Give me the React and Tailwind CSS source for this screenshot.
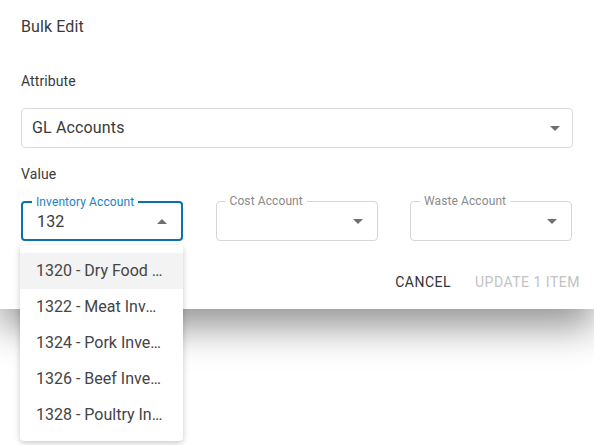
import React from 'react';

const Arrow = ({ up }) => (
    <svg width="10" height="5" viewBox="0 0 10 5" className="shrink-0">
        <path d={up ? 'M0 5 L5 0 L10 5 Z' : 'M0 0 L5 5 L10 0 Z'} fill="#6f6f6f" />
    </svg>
);

const OutlinedField = ({ label, value, focused }) => (
    <div
        className={`relative w-[162px] h-10 rounded flex items-center pl-[14px] pr-[14px] ${
            focused ? 'border-2 border-[#0b70ad]' : 'border border-[#d6d6d6]'
        }`}
    >
        <span
            className={`absolute -top-[8px] px-1 bg-white text-[12px] leading-[14px] tracking-[0.1px] ${
                focused ? 'left-[9px] text-[#1b82c0]' : 'left-[9px] text-[#8a8a8a]'
            }`}
        >
            {label}
        </span>
        <span className="flex-1 text-[16px] tracking-[0.15px] text-[#3a3a3a] pt-[1px]">{value}</span>
        <Arrow up={focused} />
    </div>
);

const options = [
    '1320 - Dry Food Inventory',
    '1322 - Meat Inventory',
    '1324 - Pork Inventory',
    '1326 - Beef Inventory',
    '1328 - Poultry Inventory',
];

export default function App() {
    return (
        <div className="w-[594px] h-[445px] bg-white overflow-hidden font-['Roboto',sans-serif]">
            <div className="relative bg-white h-[309px] px-[21px] pt-[15px] shadow-[0_18px_36px_rgba(0,0,0,0.42)]">
                <h2 className="text-[16px] leading-6 tracking-[0.1px] text-[#3a3a3a]">Bulk Edit</h2>

                <div className="mt-8 text-[14px] leading-5 tracking-[0.1px] text-[#3a3a3a]">Attribute</div>
                <div className="mt-[17px] h-10 rounded border border-[#dcdcdc] flex items-center pl-[10px] pr-[12px]">
                    <span className="flex-1 text-[16px] tracking-[0.15px] text-[#3a3a3a]">GL Accounts</span>
                    <Arrow />
                </div>

                <div className="mt-[16px] text-[14px] leading-5 tracking-[0.1px] text-[#3a3a3a]">Value</div>
                <div className="mt-[17px] flex gap-[32.5px]">
                    <div className="relative">
                        <OutlinedField label="Inventory Account" value="132" focused />
                        <ul className="absolute z-10 top-[44px] -left-px w-[163px] py-2 bg-white rounded shadow-[0_2px_6px_rgba(0,0,0,0.22)]">
                            {options.map((opt, i) => (
                                <li
                                    key={opt}
                                    className={`h-9 pl-4 pr-[19px] flex items-center text-[16px] text-[#444] ${
                                        i === 0 ? 'bg-[#f3f3f3]' : ''
                                    }`}
                                >
                                    <span className="truncate">{opt}</span>
                                </li>
                            ))}
                        </ul>
                    </div>
                    <OutlinedField label="Cost Account" />
                    <OutlinedField label="Waste Account" />
                </div>

                <div className="mt-[31px] flex justify-end gap-[24px] -mr-[7px]">
                    <button className="text-[14px] font-normal tracking-[0.5px] text-[#333]">CANCEL</button>
                    <button className="text-[14px] font-normal tracking-[0.5px] text-[#c2c2c2]">UPDATE 1 ITEM</button>
                </div>
            </div>
        </div>
    );
}
